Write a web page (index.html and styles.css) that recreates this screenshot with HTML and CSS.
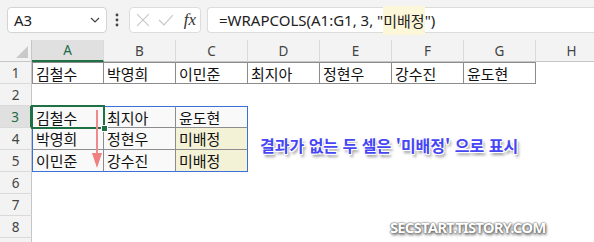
FILE: index.html
```html
<!DOCTYPE html>
<html lang="ko">
<head>
<meta charset="utf-8">
<link rel="stylesheet" href="styles.css">
</head>
<body>
<div class="app">
  <div class="toolbar">
    <div class="namebox">
      <span class="ref">A3</span>
      <svg class="chev" width="10" height="6" viewBox="0 0 10 6"><path d="M1 1 L5 5 L9 1" fill="none" stroke="#444" stroke-width="1.2"/></svg>
    </div>
    <svg class="dots" width="4" height="14" viewBox="0 0 4 14"><circle cx="2" cy="2" r="1.4" fill="#444"/><circle cx="2" cy="7" r="1.4" fill="#444"/><circle cx="2" cy="12" r="1.4" fill="#444"/></svg>
    <div class="fxbox">
      <svg width="14" height="14" viewBox="0 0 14 14"><path d="M1 1 L13 13 M13 1 L1 13" stroke="#c8c8c8" stroke-width="1.2"/></svg>
      <svg width="16" height="12" viewBox="0 0 16 12"><path d="M1 6 L6 11 L15 1" fill="none" stroke="#c8c8c8" stroke-width="1.2"/></svg>
      <span class="fx">fx</span>
    </div>
    <div class="formula">=WRAPCOLS(A1:G1, 3, "<span class="hl">미배정</span>")</div>
  </div>

  <div class="sheet">
    <div class="hd corner"><svg width="12" height="12" viewBox="0 0 12 12"><path d="M12 0 L12 12 L0 12 Z" fill="#c9c9c9"/></svg></div>
    <div class="hd col sel">A</div>
    <div class="hd col">B</div>
    <div class="hd col">C</div>
    <div class="hd col">D</div>
    <div class="hd col">E</div>
    <div class="hd col">F</div>
    <div class="hd col">G</div>
    <div class="hd col">H</div>

    <div class="hd row">1</div>
    <div class="c b bl">김철수</div>
    <div class="c b">박영희</div>
    <div class="c b">이민준</div>
    <div class="c b">최지아</div>
    <div class="c b">정현우</div>
    <div class="c b">강수진</div>
    <div class="c b">윤도현</div>
    <div class="c"></div>

    <div class="hd row">2</div>
    <div class="c"></div><div class="c"></div><div class="c"></div><div class="c"></div><div class="c"></div><div class="c"></div><div class="c"></div><div class="c"></div>

    <div class="hd row sel">3</div>
    <div class="c sp st sl">김철수</div>
    <div class="c sp st">최지아</div>
    <div class="c sp st sr">윤도현</div>
    <div class="c"></div><div class="c"></div><div class="c"></div><div class="c"></div><div class="c"></div>

    <div class="hd row">4</div>
    <div class="c sp sl">박영희</div>
    <div class="c sp">정현우</div>
    <div class="c sp sr ye">미배정</div>
    <div class="c"></div><div class="c"></div><div class="c"></div><div class="c"></div><div class="c"></div>

    <div class="hd row">5</div>
    <div class="c sp sl sb">이민준</div>
    <div class="c sp sb">강수진</div>
    <div class="c sp sr sb ye">미배정</div>
    <div class="c"></div><div class="c"></div><div class="c"></div><div class="c"></div><div class="c"></div>

    <div class="hd row">6</div>
    <div class="c"></div><div class="c"></div><div class="c"></div><div class="c"></div><div class="c"></div><div class="c"></div><div class="c"></div><div class="c"></div>
    <div class="hd row">7</div>
    <div class="c"></div><div class="c"></div><div class="c"></div><div class="c"></div><div class="c"></div><div class="c"></div><div class="c"></div><div class="c"></div>
    <div class="hd row">8</div>
    <div class="c"></div><div class="c"></div><div class="c"></div><div class="c"></div><div class="c"></div><div class="c"></div><div class="c"></div><div class="c"></div>
    <div class="hd row"></div>
    <div class="c"></div><div class="c"></div><div class="c"></div><div class="c"></div><div class="c"></div><div class="c"></div><div class="c"></div><div class="c"></div>

    <div class="active"><span class="handle"></span></div>
    <svg class="arrow" width="14" height="60" viewBox="0 0 14 60">
      <line x1="7" y1="0" x2="7" y2="46" stroke="#f08a8a" stroke-width="2"/>
      <path d="M2 43 L12 43 L7 58 Z" fill="#f08080"/>
    </svg>
    <div class="note">결과가 없는 두 셀은 '미배정' 으로 표시</div>
    <div class="mark">SECSTART.TISTORY.COM</div>
  </div>
</div>
</body>
</html>
```

FILE: styles.css
```css
* { box-sizing: border-box; }
html, body { margin: 0; padding: 0; }
body {
  width: 594px;
  height: 242px;
  overflow: hidden;
  background: #ffffff;
  font-family: "Noto Sans", "Noto Sans CJK KR", sans-serif;
}
.app {
  width: 594px;
  height: 242px;
  overflow: hidden;
  background: #f3f3f3;
}
.toolbar {
  height: 40px;
  display: flex;
  align-items: center;
  padding: 0 0 0 7px;
  background: #f3f3f3;
}
.namebox {
  width: 100px;
  height: 26px;
  background: #fff;
  border: 1px solid #d4d4d4;
  border-radius: 4px;
  display: flex;
  align-items: center;
  justify-content: space-between;
  padding: 0 6px 0 6px;
  font-size: 15px;
  color: #222;
}
.ref { line-height: 1; }
.dots { margin: 0 10px 0 8px; }
.fxbox {
  width: 72px;
  height: 26px;
  background: #fff;
  border: 1px solid #dcdcdc;
  border-radius: 4px;
  display: flex;
  align-items: center;
  padding: 0 4px 0 6px;
  gap: 8px;
}
.fx {
  font-family: "Liberation Serif", serif;
  font-style: italic;
  font-size: 17px;
  color: #333;
  margin-left: 2px;
}
.formula {
  flex: 1;
  height: 26px;
  margin-left: 6px;
  background: #fff;
  border: 1px solid #dcdcdc;
  border-right: none;
  border-radius: 4px 0 0 4px;
  display: flex;
  align-items: center;
  padding-left: 11px;
  font-size: 15px;
  color: #222;
  white-space: pre;
}
.hl {
  background: #fdf7d9;
  font-family: "Noto Sans CJK KR", sans-serif;
  padding: 4px 0;
}
.sheet {
  position: relative;
  display: grid;
  grid-template-columns: 32px repeat(8, 72px);
  grid-auto-rows: 22px;
  width: 608px;
  background: #fff;
}
.hd {
  background: #f3f3f3;
  color: #444;
  font-size: 13.5px;
  display: flex;
  align-items: center;
  justify-content: center;
}
.col {
  border-right: 1px solid #dadada;
  border-bottom: 1px solid #c6c6c6;
}
.row {
  border-right: 1px solid #c6c6c6;
  border-bottom: 1px solid #dadada;
}
.corner {
  border-right: 1px solid #c6c6c6;
  border-bottom: 1px solid #c6c6c6;
  align-items: flex-end;
  justify-content: flex-end;
  padding: 0 3px 3px 0;
}
.hd.sel {
  background: #e0e0e0;
  color: #1d6b46;
}
.col.sel { border-bottom: 2px solid #1f7145; }
.row.sel { border-right: 2px solid #1f7145; }
.c {
  font-family: "Noto Sans CJK KR", sans-serif;
  font-size: 15px;
  color: #111;
  padding-left: 3px;
  display: flex;
  align-items: center;
  white-space: nowrap;
  background: #fff;
}
.b {
  border-right: 1px solid #8c8c8c;
  border-bottom: 1px solid #8c8c8c;
  border-top: 1px solid #8c8c8c;
}
.bl { border-left: 1px solid #8c8c8c; }
.sp {
  border-right: 1px solid #8c8c8c;
  border-bottom: 1px solid #8c8c8c;
  background: #f9f9f9;
}
.st { border-top: 1px solid #3b6fd9; }
.sl { border-left: 1px solid #3b6fd9; }
.sr { border-right-color: #3b6fd9; }
.sb { border-bottom-color: #3b6fd9; }
.ye { background: #f4f2d6; }
.active {
  position: absolute;
  left: 31px;
  top: 65px;
  width: 74px;
  height: 24px;
  border: 2px solid #1f7145;
}
.handle {
  position: absolute;
  right: -5px;
  bottom: -5px;
  width: 7px;
  height: 7px;
  background: #1f7145;
  border: 1px solid #fff;
}
.arrow {
  position: absolute;
  left: 90px;
  top: 70px;
}
.note {
  position: absolute;
  left: 260px;
  top: 95px;
  font-family: "Noto Sans CJK KR", sans-serif;
  font-weight: 700;
  font-size: 16px;
  line-height: 20px;
  color: #4646f5;
  white-space: nowrap;
  text-shadow: -1px -1px 0 #fff, 1px -1px 0 #fff, -1px 1px 0 #fff, 1px 1px 0 #fff, 2px 3px 3px rgba(0,0,0,0.45);
}
.mark {
  position: absolute;
  left: 390px;
  top: 178px;
  font-family: "Noto Sans", sans-serif;
  font-weight: 700;
  font-size: 15px;
  line-height: 18px;
  letter-spacing: -0.9px;
  color: #fff;
  white-space: nowrap;
  text-shadow: 0 0 1px #555, 0 0 2px #555, 1px 2px 3px rgba(0,0,0,0.6);
}
```
